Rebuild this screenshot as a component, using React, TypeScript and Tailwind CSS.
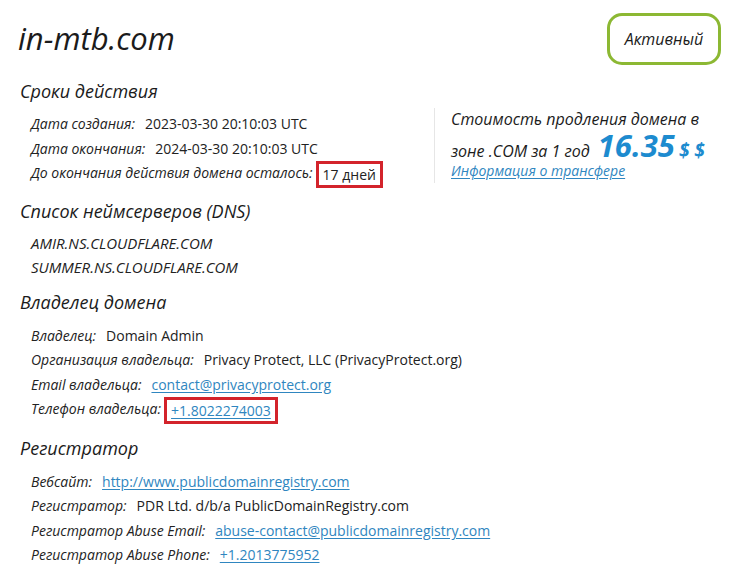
import React from "react";

const label = "italic text-[#222]";
const link = "text-[#2f86c0] underline underline-offset-2";

function Row({ name, children }: { name: string; children: React.ReactNode }) {
  return (
    <div className="h-[24.5px] leading-[24.5px] whitespace-nowrap">
      <span className={label}>{name}</span>
      <span className="ml-[10px] not-italic">{children}</span>
    </div>
  );
}

function Heading({ children, gap }: { children: React.ReactNode; gap: string }) {
  return (
    <div className={`h-[24px] leading-[24px] text-[18px] italic font-medium text-[#1b1b1b] ${gap}`}>
      {children}
    </div>
  );
}

function Boxed({ children }: { children: React.ReactNode }) {
  return (
    <span className="inline-block align-middle -ml-[7px] border-[3px] border-[#d3232b] px-[4px] leading-[21px]">
      {children}
    </span>
  );
}

export default function App() {
  return (
    <div
      className="w-[747px] h-[579px] bg-white text-[#222] overflow-hidden"
      style={{ fontFamily: '"Open Sans", "Noto Sans", sans-serif' }}
    >
      {/* page header: domain name and status badge */}
      <div className="flex items-start justify-between pl-[18px] pr-[26px] pt-[13px]">
        <h1 className="mt-[6px] text-[31px] leading-[38px] italic text-[#1b1b1b]">in-mtb.com</h1>
        <div className="w-[114px] h-[52px] rounded-[15px] border-[3px] border-[#8cb833] flex items-center justify-center italic text-[16px] text-[#1b1b1b]">
          Активный
        </div>
      </div>

      <div className="pl-[20px] text-[14px]">
        {/* validity period with renewal price */}
        <div className="flex mt-[14px]">
          <div className="w-[414px]">
            <Heading gap="mb-[9px]">Сроки действия</Heading>
            <div className="pl-[11px]">
              <Row name="Дата создания:">2023-03-30 20:10:03 UTC</Row>
              <Row name="Дата окончания:">2024-03-30 20:10:03 UTC</Row>
              <Row name="До окончания действия домена осталось:">
                <Boxed>17 дней</Boxed>
              </Row>
            </div>
          </div>
          <div className="mt-[29px] h-[75px] border-l border-[#e6e6e6] pl-[16px] italic text-[16px] text-[#1b1b1b]">
            <div className="leading-[22px]">Стоимость продления домена в</div>
            <div className="h-[30px] flex items-baseline">
              <span>зоне .COM за 1 год</span>
              <span className="ml-[8px] text-[31px] font-bold text-[#1d8bcf] leading-[30px]">16.35</span>
              <span className="ml-[4px] text-[19px] font-bold text-[#1d8bcf]">$ $</span>
            </div>
            <div className={`leading-[22px] text-[14px] ${link}`}>Информация о трансфере</div>
          </div>
        </div>

        <div className="mt-[13px]">
          <Heading gap="mb-[8px]">Список неймсерверов (DNS)</Heading>
          <div className="pl-[11px] italic text-[15px]">
            <div className="h-[24px] leading-[24px]">AMIR.NS.CLOUDFLARE.COM</div>
            <div className="h-[24px] leading-[24px]">SUMMER.NS.CLOUDFLARE.COM</div>
          </div>
        </div>

        <div className="mt-[11px]">
          <Heading gap="mb-[10px]">Владелец домена</Heading>
          <div className="pl-[11px]">
            <Row name="Владелец:">Domain Admin</Row>
            <Row name="Организация владельца:">Privacy Protect, LLC (PrivacyProtect.org)</Row>
            <Row name="Email владельца:">
              <span className={link}>contact@privacyprotect.org</span>
            </Row>
            <Row name="Телефон владельца:">
              <Boxed>
                <span className={link}>+1.8022274003</span>
              </Boxed>
            </Row>
          </div>
        </div>

        <div className="mt-[14px]">
          <Heading gap="mb-[10px]">Регистратор</Heading>
          <div className="pl-[11px]">
            <Row name="Вебсайт:">
              <span className={link}>http://www.publicdomainregistry.com</span>
            </Row>
            <Row name="Регистратор:">PDR Ltd. d/b/a PublicDomainRegistry.com</Row>
            <Row name="Регистратор Abuse Email:">
              <span className={link}>abuse-contact@publicdomainregistry.com</span>
            </Row>
            <Row name="Регистратор Abuse Phone:">
              <span className={link}>+1.2013775952</span>
            </Row>
          </div>
        </div>
      </div>
    </div>
  );
}
